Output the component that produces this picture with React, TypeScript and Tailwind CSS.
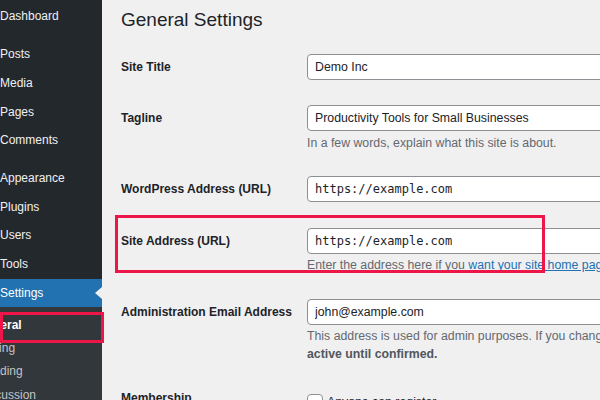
import React from "react";

const font = { fontFamily: '"Liberation Sans", Arial, sans-serif' };

const groupA = ["Posts", "Media", "Pages", "Comments"];
const groupB = ["Appearance", "Plugins", "Users", "Tools"];
const submenu = ["Writing", "Reading", "Discussion"];

function MenuItem({ label }: { label: string }) {
  return <div className="h-[28.7px] flex items-center whitespace-nowrap">{label}</div>;
}

function Sidebar() {
  return (
    <aside className="w-[102px] shrink-0 h-full bg-[#23282d] text-[#f0f0f1] text-[12px] overflow-hidden">
      <div className="h-[28px] mt-[2px] flex items-center">Dashboard</div>
      <div className="mt-[10px]">
        {groupA.map((l) => (
          <MenuItem key={l} label={l} />
        ))}
      </div>
      <div className="mt-[9px]">
        {groupB.map((l) => (
          <MenuItem key={l} label={l} />
        ))}
      </div>
      <div className="h-[28.7px] bg-[#2271b1] flex items-center justify-between text-white">
        <span>Settings</span>
        <span className="w-0 h-0 border-y-[6px] border-y-transparent border-r-[7px] border-r-[#f0f0f1]" />
      </div>
      <div className="bg-[#32373c] pt-[6px] h-full">
        <div className="h-[23.3px] flex items-center font-bold text-white whitespace-nowrap -ml-[23px]">General</div>
        {submenu.map((l) => (
          <div key={l} className="h-[23.3px] flex items-center whitespace-nowrap text-[#c3c4c7] -ml-[22px]">
            {l}
          </div>
        ))}
      </div>
    </aside>
  );
}

function Row({ label, className, children }: { label: string; className: string; children: React.ReactNode }) {
  return (
    <div className={`flex ${className}`}>
      <div className="w-[186px] shrink-0 h-[26px] flex items-center font-bold text-[12px] text-[#1d2327] whitespace-nowrap">
        {label}
      </div>
      <div className="w-[400px] shrink-0">{children}</div>
    </div>
  );
}

function Field({ value, mono }: { value: string; mono?: boolean }) {
  return (
    <input
      readOnly
      defaultValue={value}
      className={`w-full h-[26px] bg-white border border-[#8c8f94] rounded-[4px] px-[7px] text-[#1d2327] outline-none ${
        mono ? "text-[12px]" : "text-[12.3px]"
      }`}
      style={mono ? { fontFamily: '"DejaVu Sans Mono", monospace' } : font}
    />
  );
}

export default function App() {
  return (
    <div className="relative w-[600px] h-[400px] overflow-hidden flex bg-[#f0f0f1]" style={font}>
      <Sidebar />
      <main className="flex-1 pl-[19px] text-[#1d2327]">
        <h1 className="mt-[6px] leading-[28px] text-[19px] whitespace-nowrap">General Settings</h1>

        <Row label="Site Title" className="mt-[20px]">
          <Field value="Demo Inc" />
        </Row>

        <Row label="Tagline" className="mt-[25px]">
          <Field value="Productivity Tools for Small Businesses" />
          <p className="mt-[3px] text-[12.3px] leading-[18px] text-[#646970] whitespace-nowrap">
            In a few words, explain what this site is about.
          </p>
        </Row>

        <Row label="WordPress Address (URL)" className="mt-[24px]">
          <Field value="https://example.com" mono />
        </Row>

        <Row label="Site Address (URL)" className="mt-[26px]">
          <Field value="https://example.com" mono />
          <p className="mt-[2px] text-[12.3px] leading-[18px] text-[#646970] whitespace-nowrap">
            Enter the address here if you{" "}
            <a className="text-[#2271b1] underline">
              want your site home page to be different from your WordPress installation directory
            </a>
            .
          </p>
        </Row>

        <Row label="Administration Email Address" className="mt-[25px]">
          <Field value="john@example.com" />
          <p className="mt-[2px] text-[12.3px] leading-[18px] text-[#646970] whitespace-nowrap">
            This address is used for admin purposes. If you change this, an email will be sent.
          </p>
          <p className="text-[12.3px] leading-[18px] font-bold text-[#50575e] whitespace-nowrap">
            active until confirmed.
          </p>
        </Row>

        <div className="flex mt-[28px]">
          <div className="w-[186px] shrink-0 h-[14px] flex items-center font-bold text-[12px]">Membership</div>
          <label className="mt-[2px] flex items-center gap-[4px] text-[12.3px] whitespace-nowrap">
            <span className="w-[16px] h-[16px] bg-white border border-[#8c8f94] rounded-[4px]" />
            Anyone can register
          </label>
        </div>
      </main>

      <div className="absolute left-0 top-[312px] w-[104px] h-[31px] border-[3px] border-[#ee1549]" />
      <div className="absolute left-[115px] top-[215px] w-[430px] h-[58px] border-[3px] border-[#ee1549]" />
    </div>
  );
}
